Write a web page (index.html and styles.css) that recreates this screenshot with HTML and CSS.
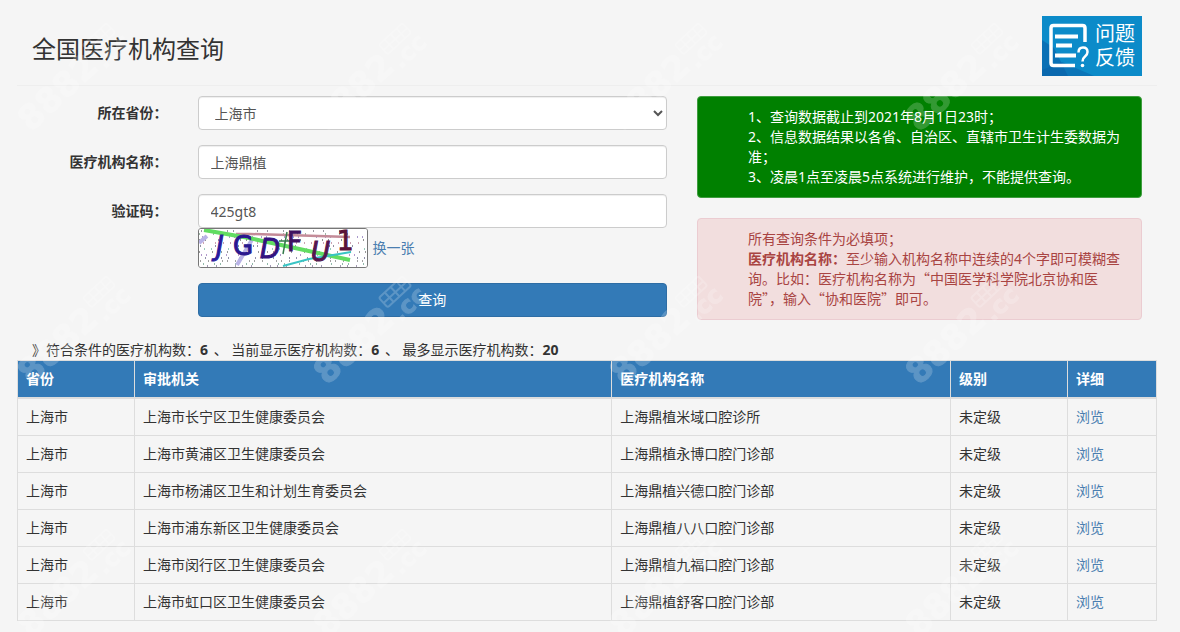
FILE: index.html
```html
<!DOCTYPE html>
<html lang="zh-CN">
<head>
<meta charset="utf-8">
<meta name="viewport" content="width=device-width, initial-scale=1">
<title>全国医疗机构查询</title>
<link rel="stylesheet" href="styles.css">
</head>
<body>
<div class="page">
  <header class="page-header">
    <h1 class="page-title">全国医疗机构查询</h1>
    <a class="feedback" href="#feedback">
      <svg class="feedback-icon" viewBox="0 0 52 60" aria-hidden="true">
        <path d="M0 24 12 32 26 60H0Z" fill="#0a5fa8" opacity=".6"/>
        <path d="M0 54 20 46 52 60H0Z" fill="#0a5fa8" opacity=".5"/>
        <g fill="none" stroke="#fff">
          <path d="M43 26V12q0-2.500-2.500-2.500H11.500Q9 9.500 9 12v35q0 2.500 2.500 2.500H33" stroke-width="3.500"/>
          <path d="M13 20.500h23M14 29.500h16M13 39.500h21" stroke-width="4"/>
          <path d="M36.500 36.500q0-5 4.500-5t4.500 4.500q0 2.500-2.500 4.500t-2.500 5" stroke-width="2.500"/>
        </g>
        <circle cx="40.500" cy="49.500" r="1.800" fill="#fff"/>
      </svg>
      <span class="feedback-text">问题<br>反馈</span>
    </a>
  </header>

  <main>
    <div class="search">
      <form class="form">
        <label class="label" for="province">所在省份：</label>
        <select class="control" id="province"><option>上海市</option></select>

        <label class="label" for="name">医疗机构名称：</label>
        <input class="control" id="name" type="text" value="上海鼎植">

        <label class="label" for="code">验证码：</label>
        <div class="code-field">
          <input class="control" id="code" type="text" value="425gt8">
          <div class="captcha-row">
            <svg class="captcha" viewBox="0 0 168 38" role="img" aria-label="验证码图片">
              <rect width="168" height="38" fill="#fff"/>
              <g class="noise">
                <path d="M2 2H166" stroke="#334" stroke-dasharray="1 9 1 15 1 5 1 23"/>
                <path d="M0 5H168" stroke="#3a6a4a" stroke-dasharray="1 13 1 7 1 19"/>
                <path d="M3 8H166" stroke="#539" stroke-dasharray="1 17 1 8 1 4"/>
                <path d="M0 11H168" stroke="#222" stroke-dasharray="1 5 1 12 1 21"/>
                <path d="M4 14H166" stroke="#946" stroke-dasharray="1 11 1 7 1 6"/>
                <path d="M1 17H166" stroke="#224" stroke-dasharray="1 14 1 3 1 18"/>
                <path d="M5 20H166" stroke="#397" stroke-dasharray="1 6 1 16 1 9"/>
                <path d="M0 23H168" stroke="#333" stroke-dasharray="1 12 1 8 1 5 1 17"/>
                <path d="M2 26H166" stroke="#639" stroke-dasharray="1 4 1 19 1 11"/>
                <path d="M6 29H166" stroke="#225" stroke-dasharray="1 15 1 6 1 10"/>
                <path d="M1 32H166" stroke="#444" stroke-dasharray="1 7 1 13 1 4"/>
                <path d="M4 35H166" stroke="#275" stroke-dasharray="1 10 1 5 1 14"/>
                <path d="M8 37H166" stroke="#436" stroke-dasharray="1 8 1 18 1 6"/>
              </g>
              <g fill="none">
                <path d="M0 14 8 7M38 36 54 9" stroke="#b9b3e6" stroke-width="4"/>
                <path d="M37 5H51L151 8" stroke="#c48b98" stroke-width="2.500"/>
                <path d="M5 1 50 9 151 31" stroke="#62dc62" stroke-width="4"/>
                <path d="M84 37 110 30 152 23" stroke="#38c4c4" stroke-width="2"/>
                <path d="M88 3 84 25M80 12H98" stroke="#347a4b" stroke-width="1.500"/>
              </g>
              <g class="captcha-letters">
                <text x="17" y="26" fill="#2a1a9c" stroke="#2a1a9c" font-style="italic">J</text>
                <text x="34" y="26" fill="#2b178e" stroke="#2b178e">G</text>
                <text x="61" y="29" fill="#34127f" stroke="#34127f" font-style="italic">D</text>
                <text x="88" y="22" fill="#40125f" stroke="#40125f">F</text>
                <text x="112" y="32" fill="#54164e" stroke="#54164e" font-style="italic">U</text>
                <text x="138" y="21" fill="#5b1237" stroke="#5b1237">1</text>
              </g>
            </svg>
            <a href="#refresh">换一张</a>
          </div>
        </div>

        <button class="submit" type="button">查询</button>
      </form>

      <div class="notices">
        <div class="notice notice-info">1、查询数据截止到2021年8月1日23时；<br>2、信息数据结果以各省、自治区、直辖市卫生计生委数据为准；<br>3、凌晨1点至凌晨5点系统进行维护，不能提供查询。</div>
        <div class="notice notice-danger">所有查询条件为必填项；<br><strong>医疗机构名称：</strong>至少输入机构名称中连续的4个字即可模糊查询。比如：医疗机构名称为<span class="quote">“</span>中国医学科学院北京协和医院<span class="quote">”</span>，输入<span class="quote">“</span>协和医院<span class="quote">”</span>即可。</div>
      </div>
    </div>

    <p class="summary">》符合条件的医疗机构数：<b>6</b> 、 当前显示医疗机构数：<b>6</b> 、 最多显示医疗机构数：<b>20</b></p>

    <table class="results">
      <colgroup><col class="col-province"><col class="col-authority"><col class="col-name"><col class="col-level"><col class="col-detail"></colgroup>
      <thead>
        <tr><th>省份</th><th>审批机关</th><th>医疗机构名称</th><th>级别</th><th>详细</th></tr>
      </thead>
      <tbody>
        <tr><td>上海市</td><td>上海市长宁区卫生健康委员会</td><td>上海鼎植米域口腔诊所</td><td>未定级</td><td><a href="#1">浏览</a></td></tr>
        <tr><td>上海市</td><td>上海市黄浦区卫生健康委员会</td><td>上海鼎植永博口腔门诊部</td><td>未定级</td><td><a href="#2">浏览</a></td></tr>
        <tr><td>上海市</td><td>上海市杨浦区卫生和计划生育委员会</td><td>上海鼎植兴德口腔门诊部</td><td>未定级</td><td><a href="#3">浏览</a></td></tr>
        <tr><td>上海市</td><td>上海市浦东新区卫生健康委员会</td><td>上海鼎植八八口腔门诊部</td><td>未定级</td><td><a href="#4">浏览</a></td></tr>
        <tr><td>上海市</td><td>上海市闵行区卫生健康委员会</td><td>上海鼎植九福口腔门诊部</td><td>未定级</td><td><a href="#5">浏览</a></td></tr>
        <tr><td>上海市</td><td>上海市虹口区卫生健康委员会</td><td>上海鼎植舒客口腔门诊部</td><td>未定级</td><td><a href="#6">浏览</a></td></tr>
      </tbody>
    </table>
  </main>

  <svg class="watermark" aria-hidden="true">
    <defs>
      <pattern id="mark" width="296" height="253" patternUnits="userSpaceOnUse">
        <g transform="translate(31 133) rotate(-43)" fill="#fff" stroke="#fff">
          <text class="mark-text" x="0" y="0">8882</text>
          <text class="mark-suffix" x="97" y="4">.cc</text>
          <g fill="none" stroke-width="2">
            <rect x="98" y="-29" width="32" height="13" rx="2"/>
            <path d="M106-29v13M114-29v13M122-29v13M98-22h32"/>
          </g>
        </g>
      </pattern>
    </defs>
    <rect width="100%" height="100%" fill="url(#mark)"/>
  </svg>
</div>
</body>
</html>
```
FILE: styles.css
```css
* {
  box-sizing: border-box;
}

body {
  margin: 0;
  background: #f5f5f5;
  color: #333;
  font: 14px/20px "Noto Sans", "Noto Sans CJK SC", sans-serif;
}

a {
  color: #4a7eb0;
  text-decoration: none;
}

.page {
  position: relative;
  padding: 0 23px 11px 17px;
}

.page-header {
  display: flex;
  justify-content: space-between;
  align-items: center;
  padding: 16px 15px 9px;
  border-bottom: 1px solid #eee;
}

.page-title {
  margin: 0;
  padding-top: 6px;
  font-size: 24px;
  line-height: 28px;
  font-weight: 400;
}

.feedback {
  display: flex;
  width: 100px;
  height: 60px;
  background: #0c8bc9;
  color: #fff;
}

.feedback-icon {
  width: 52px;
  height: 60px;
}

.feedback-text {
  padding: 6px 0 0 1px;
  font-size: 20px;
  line-height: 24px;
}

.search {
  display: grid;
  grid-template-columns: 650fr 445fr;
  gap: 30px;
  padding: 10px 15px 0 0;
}

.form {
  display: grid;
  grid-template-columns: 5fr 13fr;
  row-gap: 15px;
  align-content: start;
}

.label {
  padding: 7px 30px 0 0;
  text-align: right;
  font-weight: 700;
}

.control {
  display: block;
  width: 100%;
  height: 34px;
  padding: 6px 12px;
  border: 1px solid #ccc;
  border-radius: 4px;
  background: #fff;
  color: #555;
  font: inherit;
  box-shadow: inset 0 1px 1px rgba(0, 0, 0, .07);
}

select.control {
  padding-right: 0;
}

.captcha-row {
  display: flex;
  align-items: center;
  gap: 5px;
}

.captcha {
  width: 170px;
  height: 40px;
  border: 1px solid #777;
  border-radius: 3px;
}

.captcha-letters {
  font: 26px "DejaVu Sans", sans-serif;
}

.submit {
  grid-column: 2;
  height: 34px;
  border: 1px solid #2e6da4;
  border-radius: 4px;
  background: #337ab7;
  color: #fff;
  font: inherit;
}

.notice {
  padding: 10px 15px 10px 50px;
  border: 1px solid #ebccd1;
  border-radius: 4px;
}

.notice-info {
  margin-bottom: 20px;
  border-color: #3f9d3f;
  background: #008000;
  color: #fff;
}

.notice-danger {
  background: #f2dede;
  color: #a94442;
}

.quote {
  font-family: "Noto Sans CJK SC", sans-serif;
  line-height: 1;
}

.summary {
  margin: 20px 0 0;
  padding-left: 15px;
}

.summary b {
  margin-right: 2px;
}

.results {
  width: 100%;
  border-collapse: collapse;
  table-layout: fixed;
}

.col-province { width: 117px; }
.col-authority { width: 41.9%; }
.col-level { width: 117px; }
.col-detail { width: 89px; }

.results th,
.results td {
  padding: 8px;
  border: 1px solid #ddd;
  text-align: left;
}

.results th {
  border-bottom-width: 2px;
  background: #337ab7;
  color: #fff;
}

.watermark {
  position: absolute;
  inset: 0;
  width: 100%;
  height: 100%;
  opacity: .2;
  pointer-events: none;
}

.mark-text {
  font: bold 34px "DejaVu Sans", sans-serif;
}

.mark-suffix {
  font: bold 24px "DejaVu Sans", sans-serif;
}
```
